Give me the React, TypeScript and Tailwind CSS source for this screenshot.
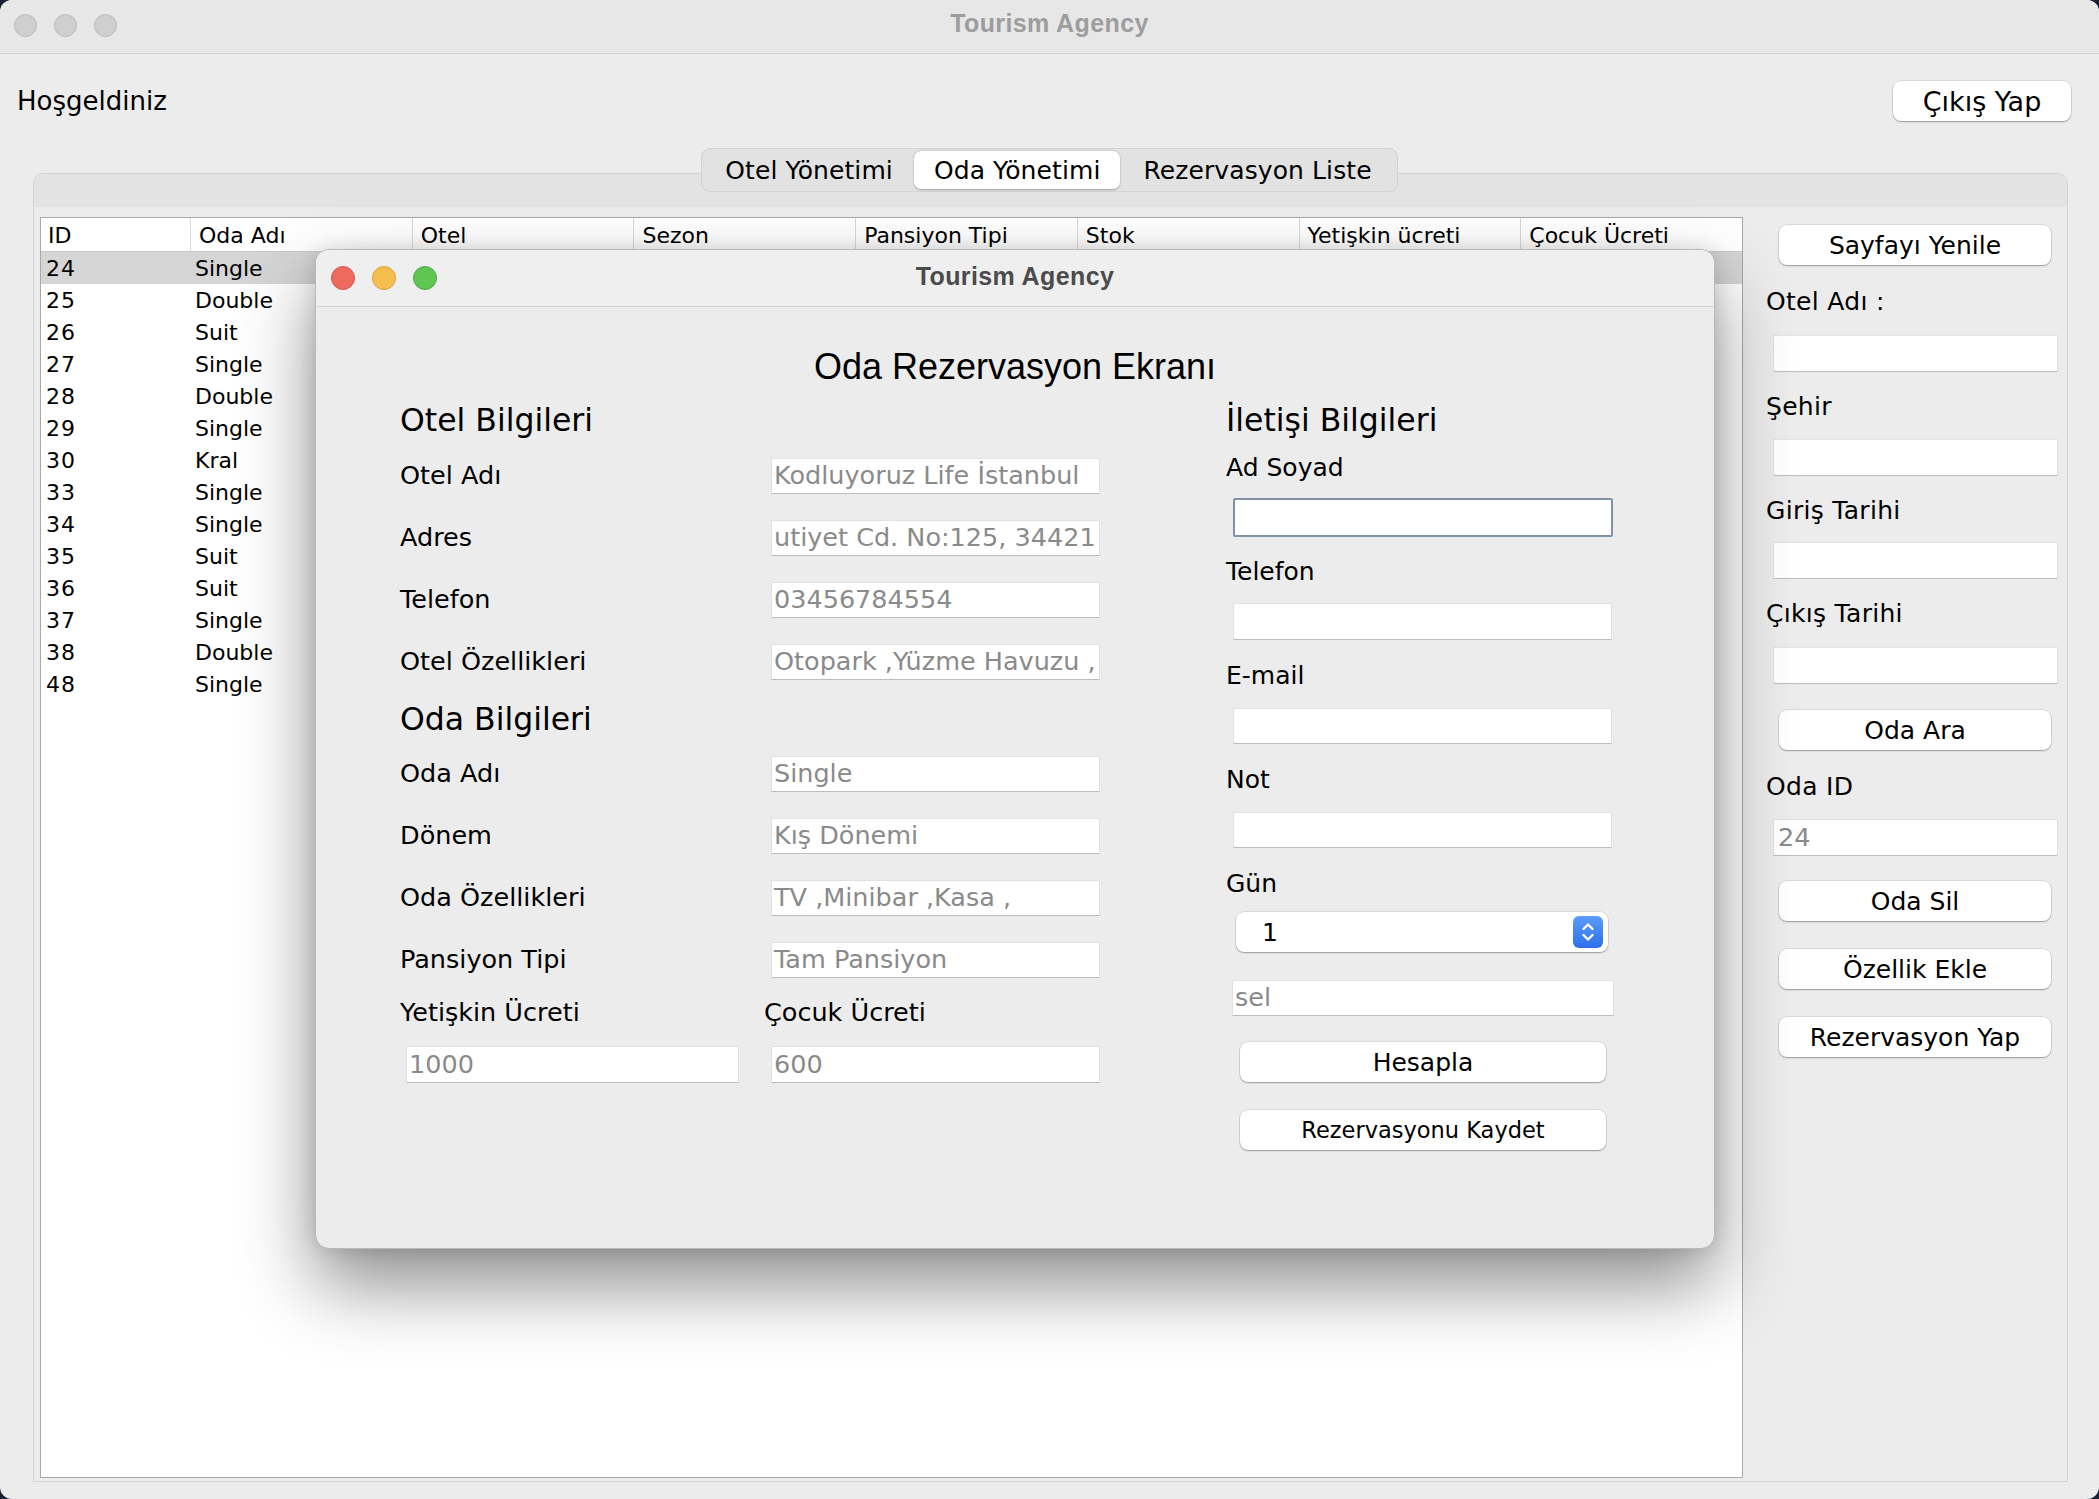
import React from "react";

const ids = ["24", "25", "26", "27", "28", "29", "30", "33", "34", "35", "36", "37", "38", "48"];
const names = ["Single", "Double", "Suit", "Single", "Double", "Single", "Kral", "Single", "Single", "Suit", "Suit", "Single", "Double", "Single"];
const headers = ["ID", "Oda Adı", "Otel", "Sezon", "Pansiyon Tipi", "Stok", "Yetişkin ücreti", "Çocuk Ücreti"];

function Button({ label, className = "" }: { label: string; className?: string }) {
  return (
    <div
      className={`flex h-[40px] items-center justify-center rounded-[8px] bg-white leading-none text-black shadow-[0_0_0_0.5px_rgba(0,0,0,0.14),0_1px_1.5px_rgba(0,0,0,0.3)] ${className}`}
    >
      {label}
    </div>
  );
}

function TextField({ value = "", className = "" }: { value?: string; className?: string }) {
  return (
    <div
      className={`flex items-center overflow-hidden whitespace-nowrap border border-[#e1e1e1] border-b-[#bcbcbc] bg-white pl-[2px] text-[25.5px] leading-none text-[#8a8a8a] ${className}`}
    >
      {value}
    </div>
  );
}

function Light({ color, border }: { color: string; border: string }) {
  return <div className={`h-[23px] w-[23px] rounded-full border ${color} ${border}`} />;
}

function Row({ label, value }: { label: string; value: string }) {
  return (
    <div className="flex h-[36px] items-center">
      <div className="w-[371px] text-[25.5px] leading-none">{label}</div>
      <TextField value={value} className="h-[36px] w-[329px]" />
    </div>
  );
}

function Dialog() {
  return (
    <div className="absolute left-[315px] top-[249px] z-20 flex h-[1000px] w-[1400px] flex-col overflow-hidden rounded-[14px] border border-[#b9b9b9] bg-[#ececec] shadow-[0_36px_75px_rgba(0,0,0,0.45),0_0_18px_rgba(0,0,0,0.12)]">
      <div className="grid h-[57px] grid-cols-[1fr_auto_1fr] items-center border-b border-[#d4d4d4] bg-[#efefef]">
        <div className="flex items-center gap-[17px] pl-[15px]">
          <div className="h-[24px] w-[24px] rounded-full border border-[#d9554a] bg-[#ee6a5f]" />
          <div className="h-[24px] w-[24px] rounded-full border border-[#d9a23c] bg-[#f5be4f]" />
          <div className="h-[24px] w-[24px] rounded-full border border-[#4ea843] bg-[#61c554]" />
        </div>
        <div className="pb-[2px] font-['Liberation_Sans',sans-serif] text-[25px] font-bold tracking-[0.4px] text-[#4b4b4b]">
          Tourism Agency
        </div>
        <div />
      </div>
      <div className="flex flex-1 flex-col">
        <div className="mt-[40px] h-[40px] text-center font-['Liberation_Sans',sans-serif] text-[36px] leading-[40px] text-black">
          Oda Rezervasyon Ekranı
        </div>
        <div className="mt-[13px] flex">
          {/* left column */}
          <div className="ml-[84px] flex w-[700px] flex-col">
            <div className="h-[40px] text-[31.5px] leading-[40px]">Otel Bilgileri</div>
            <div className="mt-[18px]">
              <Row label="Otel Adı" value="Kodluyoruz Life İstanbul" />
            </div>
            <div className="mt-[26px]">
              <Row label="Adres" value="utiyet Cd. No:125, 34421" />
            </div>
            <div className="mt-[26px]">
              <Row label="Telefon" value="03456784554" />
            </div>
            <div className="mt-[26px]">
              <Row label="Otel Özellikleri" value="Otopark ,Yüzme Havuzu ," />
            </div>
            <div className="mt-[19px] h-[40px] text-[31.5px] leading-[40px]">Oda Bilgileri</div>
            <div className="mt-[17px]">
              <Row label="Oda Adı" value="Single" />
            </div>
            <div className="mt-[26px]">
              <Row label="Dönem" value="Kış Dönemi" />
            </div>
            <div className="mt-[26px]">
              <Row label="Oda Özellikleri" value="TV ,Minibar ,Kasa ," />
            </div>
            <div className="mt-[26px]">
              <Row label="Pansiyon Tipi" value="Tam Pansiyon" />
            </div>
            <div className="mt-[20px] flex h-[30px] items-center text-[25.5px] leading-none">
              <div className="w-[364px]">Yetişkin Ücreti</div>
              <div>Çocuk Ücreti</div>
            </div>
            <div className="mt-[18px] flex">
              <TextField value="1000" className="ml-[6px] h-[37px] w-[333px]" />
              <TextField value="600" className="ml-[32px] h-[37px] w-[329px]" />
            </div>
          </div>
          {/* right column */}
          <div className="ml-[126px] flex w-[400px] flex-col">
            <div className="h-[40px] text-[31.5px] leading-[40px]">İletişi Bilgileri</div>
            <div className="mt-[12px] flex h-[30px] items-center text-[25px] leading-none">Ad Soyad</div>
            <div className="ml-[7px] mt-[16px] h-[39px] w-[380px] rounded-[2px] border-2 border-[#8391a6] bg-white" />
            <div className="mt-[19px] flex h-[30px] items-center text-[25px] leading-none">Telefon</div>
            <TextField className="ml-[7px] mt-[17px] h-[37px] w-[379px]" />
            <div className="mt-[20px] flex h-[30px] items-center text-[25px] leading-none">E-mail</div>
            <TextField className="ml-[7px] mt-[18px] h-[36px] w-[379px]" />
            <div className="mt-[20px] flex h-[30px] items-center text-[25px] leading-none">Not</div>
            <TextField className="ml-[7px] mt-[18px] h-[36px] w-[379px]" />
            <div className="mt-[20px] flex h-[30px] items-center text-[25px] leading-none">Gün</div>
            <div className="ml-[10px] mt-[14px] flex h-[40px] w-[372px] items-center justify-between rounded-[8px] bg-white pl-[26px] pr-[5px] shadow-[0_0_0_0.5px_rgba(0,0,0,0.14),0_1px_1.5px_rgba(0,0,0,0.3)]">
              <span className="text-[25px] leading-none">1</span>
              <div className="flex h-[32px] w-[30px] items-center justify-center rounded-[6px] bg-gradient-to-b from-[#5b9df9] to-[#2e6ee9]">
                <svg width="16" height="24" viewBox="0 0 16 24" fill="none" stroke="white" strokeWidth="2.4" strokeLinecap="round" strokeLinejoin="round">
                  <path d="M3.5 9 L8 4.5 L12.5 9" />
                  <path d="M3.5 15 L8 19.5 L12.5 15" />
                </svg>
              </div>
            </div>
            <TextField value="sel" className="ml-[6px] mt-[28px] h-[36px] w-[382px]" />
            <Button label="Hesapla" className="ml-[14px] mt-[26px] w-[366px] text-[25px]" />
            <Button label="Rezervasyonu Kaydet" className="ml-[14px] mt-[28px] w-[366px] text-[22.5px]" />
          </div>
        </div>
      </div>
    </div>
  );
}

function Table() {
  return (
    <div className="flex h-full w-[1703px] flex-col border border-[#a9a9a9] bg-white">
      <div className="grid h-[34px] grid-cols-[149px_repeat(7,1fr)] border-b border-[#c9c9c9] bg-white">
        {headers.map((h, i) => (
          <div
            key={h}
            className={`flex items-center overflow-hidden whitespace-nowrap pt-[2px] text-[22px] leading-none ${i === 0 ? "pl-[7px]" : "border-l border-[#dadada] pl-[8px]"}`}
          >
            {h}
          </div>
        ))}
      </div>
      <div className="flex flex-col">
        {ids.map((id, i) => (
          <div
            key={id}
            className={`grid h-[32px] grid-cols-[149px_repeat(7,1fr)] ${i === 0 ? "bg-[#d5d5d5]" : ""}`}
          >
            <div className="flex items-center pl-[5px] pt-[2px] text-[22px] leading-none tracking-[1px]">{id}</div>
            <div className="flex items-center pl-[5px] pt-[2px] text-[22px] leading-none">{names[i]}</div>
          </div>
        ))}
      </div>
    </div>
  );
}

function SideLabel({ text, className = "" }: { text: string; className?: string }) {
  return (
    <div className={`flex h-[30px] items-center pl-[23px] text-[25px] leading-none tracking-[0.3px] ${className}`}>{text}</div>
  );
}

export default function App() {
  return (
    <div className="h-[1499px] w-[2099px] bg-[#1b2130] font-['DejaVu_Sans',sans-serif] text-black">
      <div className="relative flex h-full w-full flex-col overflow-hidden rounded-[12px] bg-[#ececec]">
        {/* title bar */}
        <div className="grid h-[54px] grid-cols-[1fr_auto_1fr] items-center border-b border-[#d2d2d2] bg-[#e7e7e7]">
          <div className="flex items-center gap-[17px] pb-[2px] pl-[14px]">
            <Light color="bg-[#cfcfcf]" border="border-[#bcbcbc]" />
            <Light color="bg-[#cfcfcf]" border="border-[#bcbcbc]" />
            <Light color="bg-[#cfcfcf]" border="border-[#bcbcbc]" />
          </div>
          <div className="pb-[5px] font-['Liberation_Sans',sans-serif] text-[25px] font-bold tracking-[0.4px] text-[#9d9d9d]">
            Tourism Agency
          </div>
          <div />
        </div>

        {/* header */}
        <div className="mt-[27px] flex h-[40px] items-center justify-between pl-[17px] pr-[28px]">
          <div className="text-[26px] leading-none">Hoşgeldiniz</div>
          <Button label="Çıkış Yap" className="w-[178px] text-[27px]" />
        </div>

        {/* tabs */}
        <div className="mt-[27px] flex flex-1 flex-col">
          <div className="z-10 flex h-[44px] items-center self-center rounded-[9px] border border-[#d3d3d3] bg-[#e2e2e2] p-[2px] text-[25px] leading-none tracking-[0.1px]">
            <div className="flex h-full items-center px-[21px]">Otel Yönetimi</div>
            <div className="flex h-full items-center rounded-[7px] bg-white px-[20px] shadow-[0_0.5px_2px_rgba(0,0,0,0.3)]">
              Oda Yönetimi
            </div>
            <div className="flex h-full items-center px-[23px]">Rezervasyon Liste</div>
          </div>
          <div className="-mt-[19px] mb-[17px] ml-[33px] mr-[31px] flex flex-1 flex-col overflow-hidden rounded-t-[10px] border border-[#d4d4d4] bg-[#ececec]">
            <div className="h-[33px] bg-[#e3e3e3]" />
            <div className="flex flex-1 pb-[3px] pl-[6px] pt-[10px]">
              <Table />
              <div className="flex flex-1 flex-col pt-[8px]">
                <Button label="Sayfayı Yenile" className="ml-[36px] w-[272px] text-[25px]" />
                <SideLabel text="Otel Adı :" className="mt-[21px]" />
                <TextField className="ml-[30px] mt-[19px] h-[37px] w-[285px]" />
                <SideLabel text="Şehir" className="mt-[19px]" />
                <TextField className="ml-[30px] mt-[18px] h-[37px] w-[285px]" />
                <SideLabel text="Giriş Tarihi" className="mt-[19px]" />
                <TextField className="ml-[30px] mt-[17px] h-[37px] w-[285px]" />
                <SideLabel text="Çıkış Tarihi" className="mt-[19px]" />
                <TextField className="ml-[30px] mt-[19px] h-[37px] w-[285px]" />
                <Button label="Oda Ara" className="ml-[36px] mt-[26px] w-[272px] text-[25px]" />
                <SideLabel text="Oda ID" className="mt-[21px]" />
                <TextField value="24" className="ml-[30px] mt-[18px] h-[37px] w-[285px] pl-[4px]" />
                <Button label="Oda Sil" className="ml-[36px] mt-[25px] w-[272px] text-[25px]" />
                <Button label="Özellik Ekle" className="ml-[36px] mt-[28px] w-[272px] text-[25px]" />
                <Button label="Rezervasyon Yap" className="ml-[36px] mt-[28px] w-[272px] text-[25px]" />
              </div>
            </div>
          </div>
        </div>

        <Dialog />
      </div>
    </div>
  );
}
